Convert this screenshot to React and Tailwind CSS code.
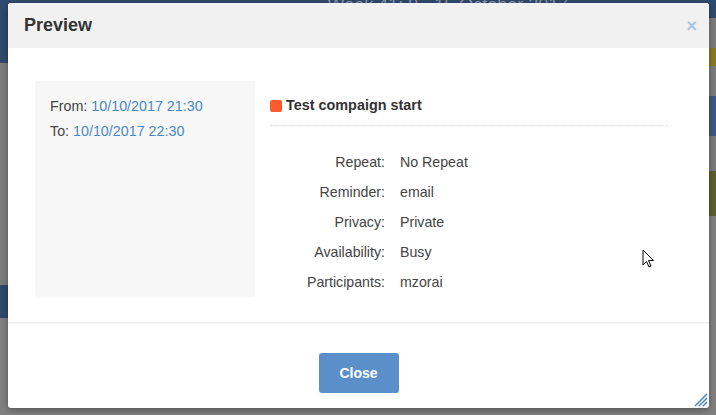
import React from "react";

const details = [
  ["Repeat:", "No Repeat"],
  ["Reminder:", "email"],
  ["Privacy:", "Private"],
  ["Availability:", "Busy"],
  ["Participants:", "mzorai"],
];

const Backdrop = () => (
  <div className="absolute inset-0 bg-[#808080]">
    {/* dimmed calendar behind the dialog */}
    <div className="h-[18px] bg-[#2f4a6c] flex justify-center">
      <span className="text-[#8496ae] text-[18px] leading-[10px] ml-[180px]">Week 41: 9 - 15 October 2017</span>
    </div>
    <div className="flex">
      <div className="w-[8px] flex flex-col">
        <div className="h-[45px] bg-[#2f4a6c]" />
        <div className="h-[222px] bg-[#7c7c7c]" />
        <div className="h-[33px] bg-[#2f4a6c]" />
      </div>
      <div className="flex-1" />
      <div className="w-[8px] flex flex-col">
        <div className="h-[30px] bg-[#7c7c7c]" />
        <div className="h-[18px] bg-[#8a7a25]" />
        <div className="h-[30px] bg-[#7c7c7c]" />
        <div className="h-[40px] bg-[#3e5a82]" />
        <div className="h-[35px] bg-[#7c7c7c]" />
        <div className="h-[45px] bg-[#5e5e2e]" />
      </div>
    </div>
  </div>
);

export default function App() {
  return (
    <div className="relative w-[716px] h-[415px] overflow-hidden" style={{ fontFamily: '"Liberation Sans", Arial, sans-serif' }}>
      <Backdrop />

      <div className="absolute left-[8px] top-[3px] w-[701px] h-[405px] bg-white rounded-[3px] shadow-[0_2px_6px_rgba(0,0,0,0.35)] flex flex-col overflow-hidden">
        {/* header */}
        <div className="h-[45px] bg-[#f1f1f1] flex items-center justify-between pl-[16px] pr-[12px] shrink-0">
          <h3 className="text-[18px] font-bold text-[#333]">Preview</h3>
          <span className="text-[18px] leading-none text-[#a9c4e4] font-bold">×</span>
        </div>

        {/* body */}
        <div className="h-[275px] flex pt-[33px] pl-[27px] border-b border-[#eeeeee] shadow-[0_1px_1px_rgba(0,0,0,0.03)] shrink-0">
          <div className="w-[220px] h-[216px] bg-[#f7f7f7] rounded-[2px] px-[15px] pt-[13px] text-[14.3px] text-[#444]">
            <div className="h-[25px] leading-[25px]">
              From: <span className="text-[#4a88c9]">10/10/2017 21:30</span>
            </div>
            <div className="h-[25px] leading-[25px]">
              To: <span className="text-[#4a88c9]">10/10/2017 22:30</span>
            </div>
          </div>

          <div className="w-[398px] ml-[15px]">
            <div className="flex items-center h-[45px] pt-[5px] border-b border-dotted border-[#dcdcdc]">
              <span className="w-[12px] h-[12px] rounded-[2px] bg-[#ff5b2e] mr-[4px]" />
              <span className="text-[14.4px] font-bold text-[#333]">Test compaign start</span>
            </div>
            <div className="pt-[22px]">
              {details.map(([label, value]) => (
                <div key={label} className="flex h-[30px] items-center text-[14.2px] text-[#444]">
                  <span className="w-[115px] text-right">{label}</span>
                  <span className="ml-[15px]">{value}</span>
                </div>
              ))}
            </div>
          </div>
        </div>

        {/* footer */}
        <div className="flex-1 flex justify-center pt-[30px] relative">
          <button className="w-[80px] h-[40px] bg-[#5a8fca] rounded-[3px] text-white text-[14px] font-bold">
            Close
          </button>
          <svg className="absolute right-[1px] bottom-[1px]" width="14" height="14" viewBox="0 0 14 14">
            <path d="M1 13 L13 1 M5 13 L13 5 M9 13 L13 9" stroke="#4a7fc4" strokeWidth="1.5" />
          </svg>
        </div>
      </div>

      {/* mouse cursor */}
      <svg className="absolute left-[642px] top-[249px]" width="13" height="20" viewBox="0 0 13 20">
        <path d="M1 1 L1 16 L4.5 12.5 L7 18 L9 17 L6.5 11.5 L11.5 11.5 Z" fill="#fff" stroke="#000" strokeWidth="1" />
      </svg>
    </div>
  );
}
